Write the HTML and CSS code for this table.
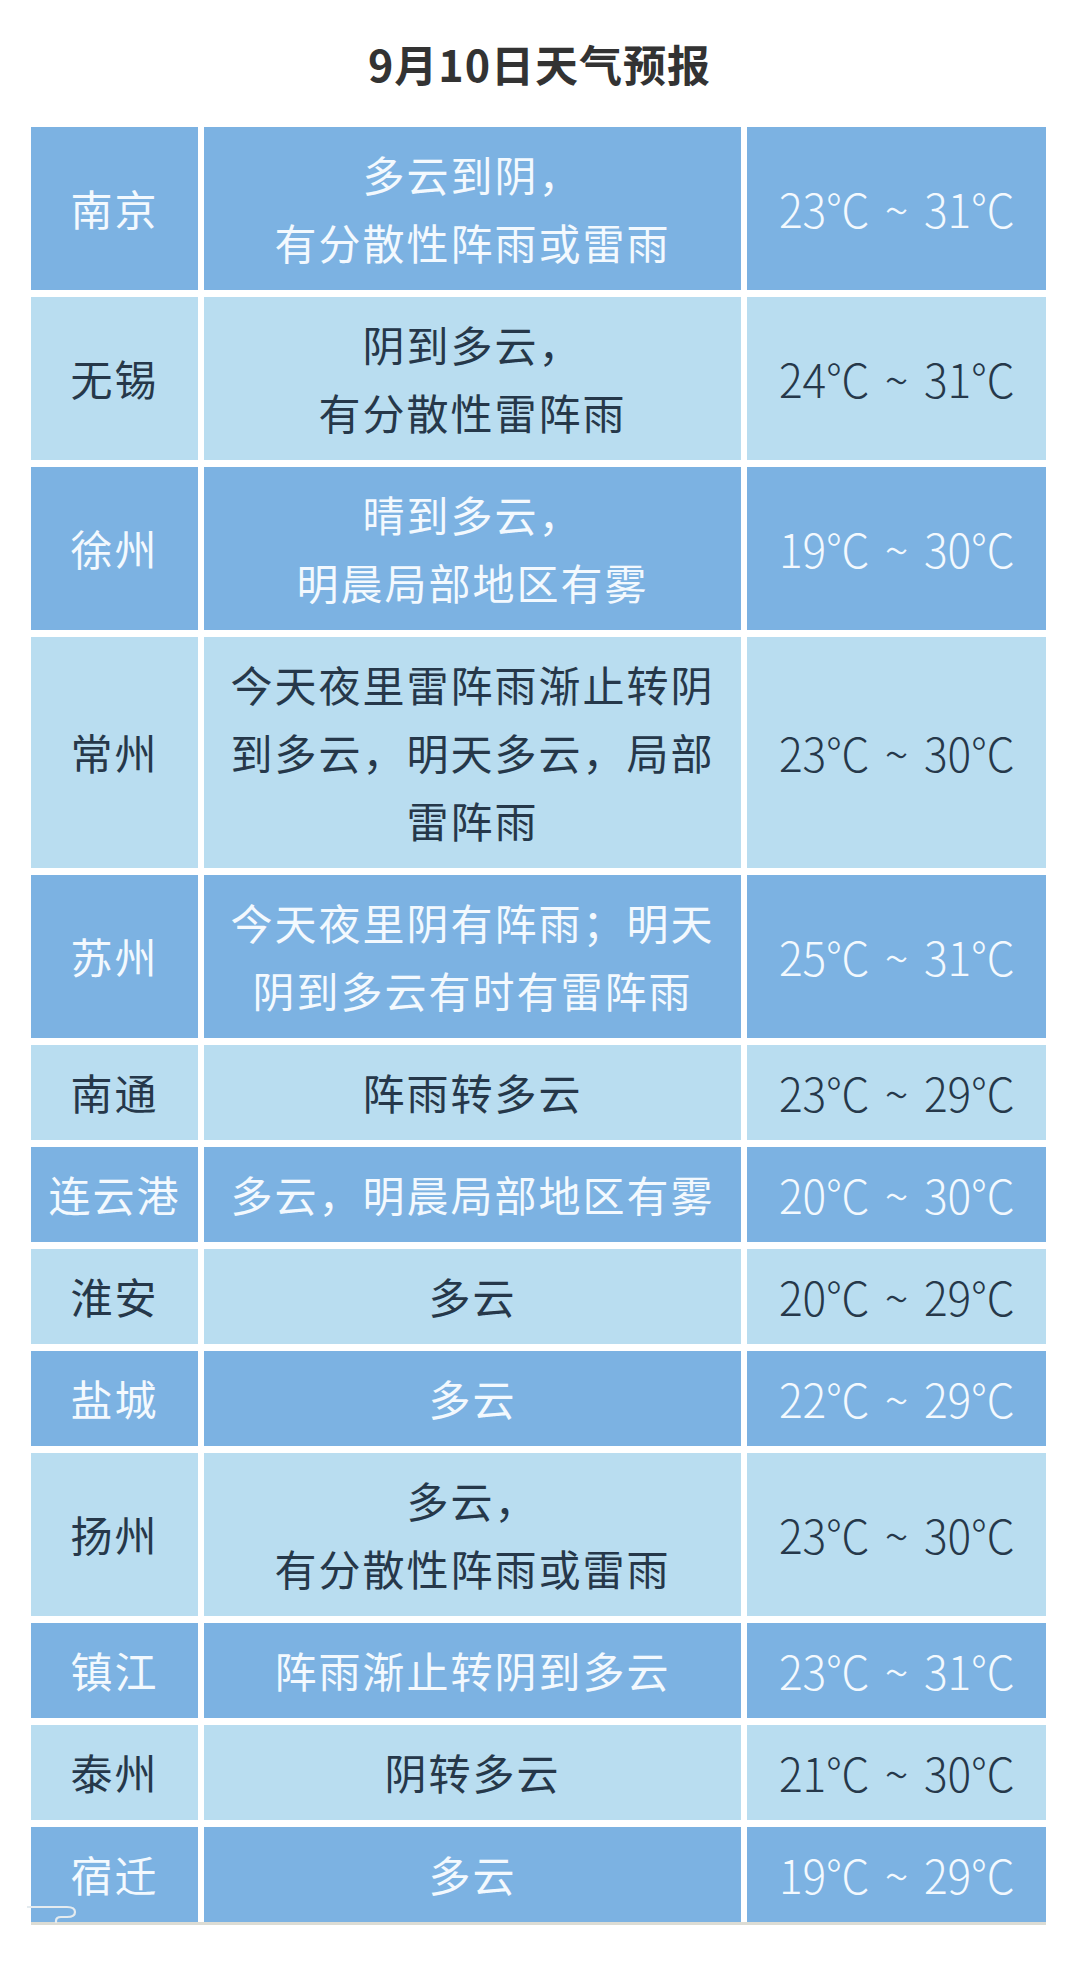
FILE: index.html
```html
<!DOCTYPE html>
<html lang="zh-CN">
<head>
<meta charset="utf-8">
<title>9月10日天气预报</title>
<link rel="stylesheet" href="styles.css">
</head>
<body>
<div class="page">
  <h1 class="title">9月10日天气预报</h1>
  <div class="table">
    <div class="row dark"><div class="cell city">南京</div><div class="cell desc">多云到阴，<br>有分散性阵雨或雷雨</div><div class="cell temp"><span>23°C ~ 31°C</span></div></div>
    <div class="row light"><div class="cell city">无锡</div><div class="cell desc">阴到多云，<br>有分散性雷阵雨</div><div class="cell temp"><span>24°C ~ 31°C</span></div></div>
    <div class="row dark"><div class="cell city">徐州</div><div class="cell desc">晴到多云，<br>明晨局部地区有雾</div><div class="cell temp"><span>19°C ~ 30°C</span></div></div>
    <div class="row light"><div class="cell city">常州</div><div class="cell desc">今天夜里雷阵雨渐止转阴<br>到多云，明天多云，局部<br>雷阵雨</div><div class="cell temp"><span>23°C ~ 30°C</span></div></div>
    <div class="row dark"><div class="cell city">苏州</div><div class="cell desc">今天夜里阴有阵雨；明天<br>阴到多云有时有雷阵雨</div><div class="cell temp"><span>25°C ~ 31°C</span></div></div>
    <div class="row light"><div class="cell city">南通</div><div class="cell desc">阵雨转多云</div><div class="cell temp"><span>23°C ~ 29°C</span></div></div>
    <div class="row dark"><div class="cell city">连云港</div><div class="cell desc">多云，明晨局部地区有雾</div><div class="cell temp"><span>20°C ~ 30°C</span></div></div>
    <div class="row light"><div class="cell city">淮安</div><div class="cell desc">多云</div><div class="cell temp"><span>20°C ~ 29°C</span></div></div>
    <div class="row dark"><div class="cell city">盐城</div><div class="cell desc">多云</div><div class="cell temp"><span>22°C ~ 29°C</span></div></div>
    <div class="row light"><div class="cell city">扬州</div><div class="cell desc">多云，<br>有分散性阵雨或雷雨</div><div class="cell temp"><span>23°C ~ 30°C</span></div></div>
    <div class="row dark"><div class="cell city">镇江</div><div class="cell desc">阵雨渐止转阴到多云</div><div class="cell temp"><span>23°C ~ 31°C</span></div></div>
    <div class="row light"><div class="cell city">泰州</div><div class="cell desc">阴转多云</div><div class="cell temp"><span>21°C ~ 30°C</span></div></div>
    <div class="row dark"><div class="cell city">宿迁</div><div class="cell desc">多云</div><div class="cell temp"><span>19°C ~ 29°C</span></div></div>
    <svg class="curl" width="60" height="24" viewBox="0 0 60 24" aria-hidden="true">
      <path d="M0 6 H40 Q48 6 48 11 Q48 16 40 16 H34 Q29 16 29 20 V22" fill="none" stroke="#e4ebef" stroke-width="2.2"/>
    </svg>
  </div>
</div>
</body>
</html>
```

FILE: styles.css
```css
html, body {
  margin: 0;
  padding: 0;
  background: #ffffff;
}

.page {
  width: 1079px;
  min-height: 1978px;
  font-family: "Noto Sans CJK SC", "Noto Sans", sans-serif;
}

.title {
  margin: 0;
  padding-top: 42px;
  height: 43px;
  margin-bottom: 42px;
  font-size: 43px;
  line-height: 43px;
  font-weight: 700;
  letter-spacing: 1px;
  color: #333333;
  text-align: center;
}

.table {
  position: relative;
  margin-left: 31px;
  width: 1015px;
  display: flex;
  flex-direction: column;
  gap: 7px;
  border-bottom: 3px solid #dcdcd4;
}

.row {
  display: grid;
  grid-template-columns: 167px 537px 299px;
  column-gap: 6px;
}

.cell {
  display: flex;
  align-items: center;
  justify-content: center;
  text-align: center;
  padding: 13px 0 14px;
  font-size: 42px;
  line-height: 68px;
  letter-spacing: 2px;
}

.row.dark .cell {
  background: #7cb2e2;
  color: #f3f9fe;
}

.row.light .cell {
  background: #b9ddf0;
  color: #26384a;
}

.temp span {
  display: inline-block;
  font-family: "Noto Sans CJK SC", "Noto Sans", sans-serif;
  font-weight: 300;
  font-size: 46px;
  letter-spacing: 0;
  word-spacing: 6px;
  white-space: pre;
  transform: scaleX(0.96);
}

.curl {
  position: absolute;
  left: -4px;
  bottom: -3px;
}
```
